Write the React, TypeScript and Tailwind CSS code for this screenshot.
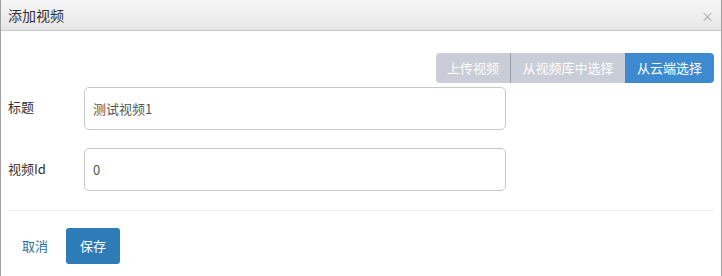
import React from "react";

export default function App() {
  const font = { fontFamily: '"Noto Sans CJK SC", "Liberation Sans", sans-serif' };
  return (
    <div
      className="w-[722px] h-[276px] bg-white border-l border-r border-[#a0a0a0] overflow-hidden flex flex-col"
      style={font}
    >
      <div className="h-[31px] shrink-0 flex items-center justify-between pl-[7px] pr-[7px] border-b border-[#c8c8c8] bg-gradient-to-b from-[#f7f7f7] to-[#e6e6e6]">
        <span className="text-[14px] text-[#333] leading-none">添加视频</span>
        <span className="text-[13px] text-[#aaa] leading-none">×</span>
      </div>
      <div className="flex justify-end pr-[7px] pt-[22px]">
        <div className="flex h-[30px] rounded-[4px] overflow-hidden text-[13px] text-white">
          <div className="w-[75px] flex items-center justify-center bg-[#c8cdd7] border-r border-[#9aa0a8]">上传视频</div>
          <div className="w-[114px] flex items-center justify-center bg-[#c8cdd7]">从视频库中选择</div>
          <div className="w-[89px] flex items-center justify-center bg-[#3d8ad0]">从云端选择</div>
        </div>
      </div>
      <div className="flex items-center mt-[4px]">
        <div className="w-[83px] pl-[7px] pb-[3px] text-[13px] text-[#333]">标题</div>
        <div className="w-[422px] h-[43px] border border-[#c8c8c8] rounded-[5px] flex items-center px-[8px] text-[13px] text-[#555]">
          测试视频1
        </div>
      </div>
      <div className="flex items-center mt-[18px]">
        <div className="w-[83px] pl-[7px] pb-[2px] text-[13px] text-[#333]">视频Id</div>
        <div className="w-[422px] h-[43px] border border-[#c8c8c8] rounded-[5px] flex items-center px-[8px] text-[13px] text-[#555]">
          0
        </div>
      </div>
      <div className="mx-[7px] mt-[19px] border-t border-[#eeeeee]" />
      <div className="flex items-center mt-[17px] pl-[21px] gap-[18px]">
        <span className="text-[13px] text-[#2a6ea8]">取消</span>
        <div className="w-[54px] h-[36px] rounded-[3px] bg-[#2d7cb8] text-white text-[13px] flex items-center justify-center">
          保存
        </div>
      </div>
    </div>
  );
}
